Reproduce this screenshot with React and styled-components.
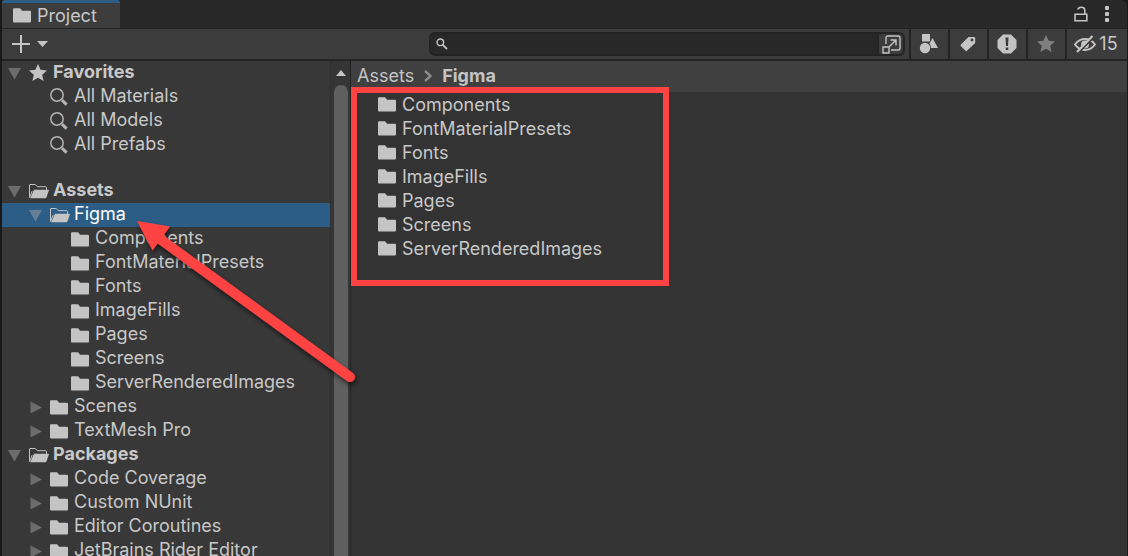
import React from 'react';
import styled, { createGlobalStyle } from 'styled-components';

const Global = createGlobalStyle`
  * { box-sizing: border-box; }
  body { margin: 0; background: #191919; font-family: Inter, "Liberation Sans", sans-serif; font-size: 18px; line-height: 24px; font-optical-sizing: none; color: #c8c8c8; }
  button, input { font: inherit; font-optical-sizing: inherit; color: inherit; margin: 0; }
  ul { list-style: none; margin: 0; padding: 0; }
`;

const Window = styled.div`
  position: relative;
  height: 100vh;
  display: flex;
  flex-direction: column;
  padding: 0 1px 0 2px;
  overflow: hidden;
`;
const TabBar = styled.header`
  display: flex;
  justify-content: space-between;
  height: 29px;
  flex: none;
  background: #282828;
  border-bottom: 1px solid #232323;
  border-radius: 0 6px 0 0;
`;
const Tab = styled.button`
  display: flex;
  align-items: center;
  gap: 6px;
  padding: 0 23px 0 11px;
  border: 0;
  border-top: 3px solid #2c5d87;
  border-radius: 3px 3px 0 0;
  background: #3c3c3c;
`;
const WindowActions = styled.div`
  display: flex;
  align-items: center;
  gap: 4px;
  padding-right: 9px;
`;
const IconButton = styled.button`
  display: flex;
  align-items: center;
  justify-content: center;
  width: ${(p) => p.$width || 22}px;
  height: 24px;
  padding: 0;
  border: 0;
  background: none;
`;
const Toolbar = styled.div`
  display: flex;
  align-items: center;
  justify-content: space-between;
  height: 32px;
  flex: none;
  background: #3c3c3c;
  border-bottom: 2px solid #232323;
`;
const CreateButton = styled.button`
  display: flex;
  align-items: center;
  gap: 7px;
  height: 30px;
  padding: 0 10px;
  border: 0;
  background: none;
`;
const ToolbarEnd = styled.div`
  display: flex;
  align-items: center;
  flex: 0 1 698px;
`;
const SearchBox = styled.div`
  display: flex;
  flex: 1;
  align-items: center;
  height: 24px;
  margin-right: 4px;
  border: 2px solid #232323;
  border-radius: 6px;
  background: #282828;
  overflow: hidden;
`;
const SearchLabel = styled.label`
  display: flex;
  padding-left: 5px;
`;
const SearchInput = styled.input`
  flex: 1;
  min-width: 0;
  height: 20px;
  border: 0;
  outline: 0;
  background: none;
`;
const OpenSearch = styled(IconButton)`
  background: #3c3c3c;
  border-left: 2px solid #232323;
  width: 26px;
`;
const FilterButton = styled.button`
  display: flex;
  align-items: center;
  justify-content: center;
  gap: 3px;
  flex: none;
  width: ${(p) => p.$width || 39}px;
  height: 30px;
  padding: 0 2px 0 0;
  border: 0;
  border-left: 2px solid #232323;
  background: #3c3c3c;
`;
const Body = styled.div`
  display: flex;
  flex: 1;
  min-height: 0;
`;
const Tree = styled.nav`
  flex: 0 0 328px;
  background: #383838;
  overflow: hidden;
`;
const Group = styled.ul`
  margin-bottom: ${(p) => p.$gap || 0}px;
`;
const TreeRow = styled.li`
  display: flex;
  align-items: center;
  height: 24px;
  padding-left: ${(p) => 6 + p.$depth * 21}px;
  background: ${(p) => (p.$selected ? '#2c5d87' : 'none')};
  color: ${(p) => (p.$selected ? '#ffffff' : 'inherit')};
  font-weight: ${(p) => (p.$depth === 0 ? 700 : 400)};
  white-space: nowrap;
`;
const FoldSlot = styled.span`
  display: flex;
  flex: none;
  width: 21px;
  opacity: 0.5;
`;
const IconSlot = styled.span`
  display: flex;
  flex: none;
  width: 24px;
`;
const Label = styled.span`
  padding-bottom: 2px;
`;
const Scrollbar = styled.div`
  display: flex;
  flex-direction: column;
  align-items: center;
  flex: 0 0 21px;
  padding: 9px 1px 0 2px;
  gap: 9px;
  background: #353535;
  border-left: 1px solid #303030;
  border-right: 1px solid #232323;
`;
const Thumb = styled.div`
  flex: 1;
  width: 14px;
  border-radius: 7px 7px 0 0;
  background: #5f5f5f;
`;
const Content = styled.main`
  position: relative;
  flex: 1;
  min-width: 0;
  background: #333333;
`;
const Breadcrumb = styled.div`
  display: flex;
  align-items: center;
  gap: 10px;
  height: 31px;
  padding: 0 6px 1px;
  background: #404040;
`;
const Crumb = styled.a`
  color: #c4c4c4;
  text-decoration: none;
  font-weight: ${(p) => (p.$current ? 700 : 400)};
`;
const FileRow = styled.li`
  display: flex;
  align-items: center;
  height: 24px;
  padding-left: 27px;
`;
const FileLabel = styled.span`
  padding-top: 2px;
`;
const Frame = styled.div`
  position: absolute;
  top: 26px;
  left: 0;
  width: 318px;
  height: 199px;
  border: 6px solid #ff4343;
  pointer-events: none;
`;
const Arrow = styled.svg`
  position: absolute;
  top: 210px;
  left: 130px;
  pointer-events: none;
`;

const Folder = () => (
  <svg width="18" height="15" viewBox="0 0 18 15"><path fill="#c4c4c4" d="M0 1.2Q0 .2 1 .2H6.6Q7.3.2 7.8.9L9 2.8H17Q18 2.8 18 3.8V13.4Q18 14.4 17 14.4H1Q0 14.4 0 13.4Z" /></svg>
);
const FolderOpen = () => (
  <svg width="20" height="15" viewBox="0 0 20 15">
    <path fill="none" stroke="#c4c4c4" d="M.5 13.5V1Q.5.5 1 .5H6.3L8.3 2.7H16.8Q17.5 2.7 17.5 3.4V6M.5 13.5L3.2 7" />
    <path fill="#c4c4c4" d="M5 5.8H19.2Q20.1 5.8 19.8 6.8L17.4 13.6Q17.1 14.3 16.4 14.3H1.2Z" />
  </svg>
);
const starPath = 'M9 0L11.6 5.8L18 6.5L13.2 10.7L14.6 17L9 13.7L3.4 17L4.8 10.7L0 6.5L6.4 5.8Z';
const Star = ({ fill = '#c4c4c4', size = 18 }) => (
  <svg width={size} height={size} viewBox="0 0 18 18"><path fill={fill} d={starPath} /></svg>
);
const Lens = () => (
  <svg width="19" height="19" viewBox="0 0 19 19" fill="none" stroke="#b4b4b4">
    <circle cx="7" cy="7" r="6.2" strokeWidth="1.5" /><path strokeWidth="3" d="M12 12.2L16.6 16.6" />
  </svg>
);
const Fold = ({ open }) => (
  <svg width="13" height="13" viewBox="0 0 13 13"><path fill="#a0a0a0" d={open ? 'M0 1H13L6.5 12.5Z' : 'M1.5 .5L13 6.5L1.5 12.5Z'} /></svg>
);

const icons = { folder: Folder, open: FolderOpen, star: Star, lens: Lens };
const folders = ['Components', 'FontMaterialPresets', 'Fonts', 'ImageFills', 'Pages', 'Screens', 'ServerRenderedImages'];
const favorites = [
  { label: 'Favorites', depth: 0, icon: 'star', fold: 'open' },
  ...['All Materials', 'All Models', 'All Prefabs'].map((label) => ({ label, depth: 1, icon: 'lens' })),
];
const closed = (label) => ({ label, depth: 1, icon: 'folder', fold: 'closed' });
const assets = [
  { label: 'Assets', depth: 0, icon: 'open', fold: 'open' },
  { label: 'Figma', depth: 1, icon: 'open', fold: 'open', selected: true },
  ...folders.map((label) => ({ label, depth: 2, icon: 'folder' })),
  closed('Scenes'),
  closed('TextMesh Pro'),
];
const packages = [
  { label: 'Packages', depth: 0, icon: 'open', fold: 'open' },
  ...['Code Coverage', 'Custom NUnit', 'Editor Coroutines', 'JetBrains Rider Editor'].map(closed),
];

function TreeGroup({ items, gap }) {
  return (
    <Group $gap={gap}>
      {items.map(({ label, depth, icon, fold, selected }) => {
        const Icon = icons[icon];
        return (
          <TreeRow key={label} $depth={depth} $selected={selected}>
            <FoldSlot>{fold && <Fold open={fold === 'open'} />}</FoldSlot>
            <IconSlot><Icon /></IconSlot>
            <Label>{label}</Label>
          </TreeRow>
        );
      })}
    </Group>
  );
}

export default function App() {
  return (
    <Window>
      <Global />
      <TabBar>
        <Tab><Folder />Project</Tab>
        <WindowActions>
          <IconButton aria-label="Lock">
            <svg width="14" height="16" viewBox="0 0 14 16" fill="none" stroke="#c4c4c4" strokeWidth="1.6"><path d="M1 8.3H12.8V14.8H1ZM10.8 8V4.5Q10.8 1.2 7.3 1.2Q4.5 1.2 3.8 3.5" /></svg>
          </IconButton>
          <IconButton aria-label="More options">
            <svg width="4" height="16" viewBox="0 0 4 16" fill="#c4c4c4"><rect width="4" height="4" rx="1" /><rect y="6" width="4" height="4" rx="1" /><rect y="12" width="4" height="4" rx="1" /></svg>
          </IconButton>
        </WindowActions>
      </TabBar>
      <Toolbar>
        <CreateButton aria-label="Create">
          <svg width="18" height="18" viewBox="0 0 18 18" stroke="#c4c4c4" strokeWidth="2"><path d="M9 0V18M0 9H18" /></svg>
          <svg width="11" height="6" viewBox="0 0 11 6" fill="#c4c4c4"><path d="M0 0H11L5.5 6Z" /></svg>
        </CreateButton>
        <ToolbarEnd>
          <SearchBox>
            <SearchLabel htmlFor="search">
              <svg width="12" height="12" viewBox="0 0 12 12" fill="none" stroke="#c4c4c4"><circle cx="4.3" cy="4.3" r="3.3" strokeWidth="1.4" /><path strokeWidth="1.8" d="M6.8 6.8L11 11" /></svg>
            </SearchLabel>
            <SearchInput id="search" aria-label="Search" />
            <OpenSearch aria-label="Open in search">
              <svg width="19" height="19" viewBox="0 0 19 19" fill="none" stroke="#c4c4c4" strokeWidth="1.4"><path d="M4 9V3Q4 1 6 1H16Q18 1 18 3V13Q18 15 16 15H9M1 12H7V18H1ZM7.5 11.5L13.5 5.5M8.5 5H14V10.5" /></svg>
            </OpenSearch>
          </SearchBox>
          <FilterButton aria-label="Search by type">
            <svg width="20" height="20" viewBox="0 0 20 20" fill="#c4c4c4"><path d="M3 0H11V7.5H3ZM13.5 4L19 14H12Q11.5 10.5 10.5 9.5Z" /><circle cx="6" cy="14" r="5.2" /></svg>
          </FilterButton>
          <FilterButton aria-label="Search by label">
            <svg width="16" height="16" viewBox="0 0 16 16" fill="#c4c4c4"><path fillRule="evenodd" d="M8.5 1L14 1Q15.2 1 15.2 2.2V7L7 14.8Q6.2 15.6 5.4 14.8L.8 10Q.2 9.3.8 8.6ZM12 2.6A1.4 1.4 0 1 0 12 5.4A1.4 1.4 0 1 0 12 2.6Z" /></svg>
          </FilterButton>
          <FilterButton aria-label="Search by import log">
            <svg width="20" height="20" viewBox="0 0 20 20"><path fill="#c4c4c4" d="M6 .5H14L19.5 6V14L14 19.5H6L.5 14V6Z" /><path fill="#3c3c3c" d="M8.5 3.5H11.5L11 12H9ZM8.7 13.5H11.3V16H8.7Z" /></svg>
          </FilterButton>
          <FilterButton aria-label="Save search"><Star fill="#7f7f7f" /></FilterButton>
          <FilterButton $width={62} aria-label="Hidden packages: 15">
            <svg width="22" height="18" viewBox="0 0 22 18" fill="none" stroke="#c4c4c4" strokeWidth="1.9">
              <path d="M1 9.500Q5 4 11 4T21 9.500Q17 15 11 15T1 9.500Z" />
              <circle cx="11" cy="9.500" r="3" fill="#c4c4c4" />
              <path stroke="#3c3c3c" strokeWidth="2" d="M4.500 17.500L19.500 2.500" />
              <path strokeWidth="2.200" d="M3 17L18.500 1" />
            </svg>
            15
          </FilterButton>
        </ToolbarEnd>
      </Toolbar>
      <Body>
        <Tree>
          <TreeGroup items={favorites} gap={22} />
          <TreeGroup items={assets} />
          <TreeGroup items={packages} />
        </Tree>
        <Scrollbar>
          <svg width="10" height="6" viewBox="0 0 10 6" fill="#c4c4c4"><path d="M0 6L5 0L10 6Z" /></svg>
          <Thumb />
        </Scrollbar>
        <Content>
          <Breadcrumb>
            <Crumb href="#assets">Assets</Crumb>
            <svg width="8" height="12" viewBox="0 0 8 12" fill="none" stroke="#8c8c8c" strokeWidth="2.4"><path d="M1 1L6.500 6L1 11" /></svg>
            <Crumb href="#figma" $current>Figma</Crumb>
          </Breadcrumb>
          <ul>
            {folders.map((name) => (
              <FileRow key={name}><IconSlot><Folder /></IconSlot><FileLabel>{name}</FileLabel></FileRow>
            ))}
          </ul>
          <Frame />
        </Content>
      </Body>
      <Arrow width="240" height="190" viewBox="130 210 240 190">
        <defs>
          <filter id="shadow" x="-10%" y="-10%" width="120%" height="125%"><feDropShadow dx="1" dy="3" stdDeviation="2.500" floodOpacity="0.600" /></filter>
        </defs>
        <g filter="url(#shadow)">
          <path d="M160 239L350 377" stroke="#ff4343" strokeWidth="10" strokeLinecap="round" />
          <path fill="#ff4343" d="M137 221L170 226.500L152.500 250.500Z" />
        </g>
      </Arrow>
    </Window>
  );
}
